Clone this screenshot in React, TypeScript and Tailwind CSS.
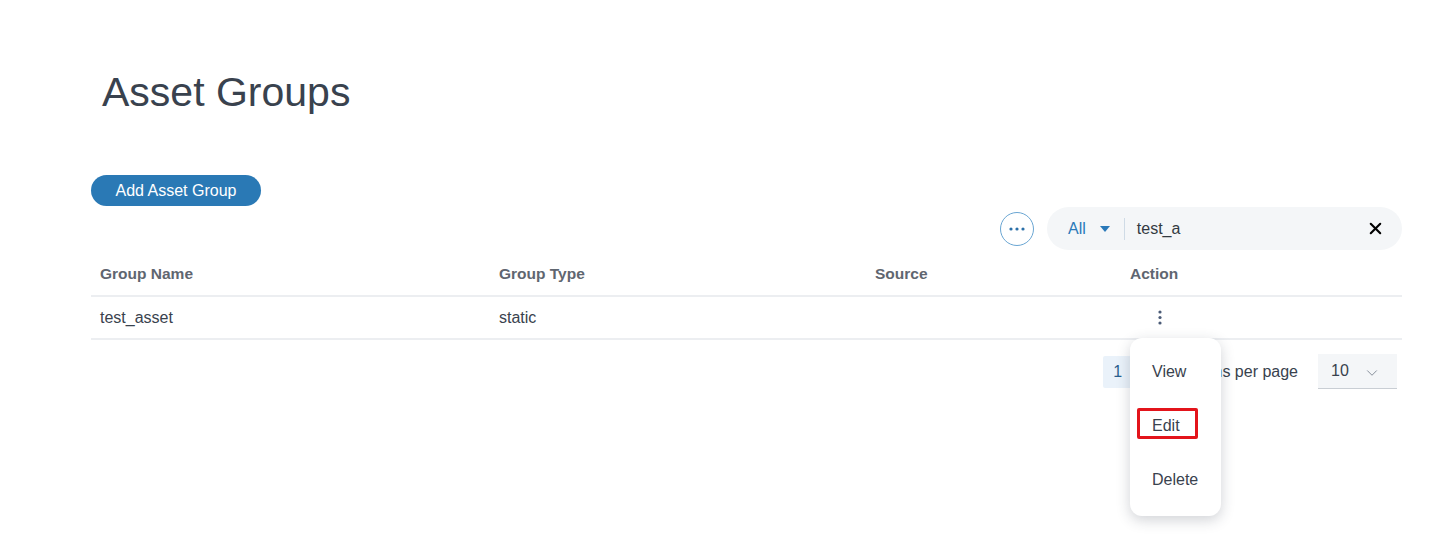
import { X, ChevronDown } from "lucide-react";

const columns = [
  { label: "Group Name", w: "w-[399px]" },
  { label: "Group Type", w: "w-[376px]" },
  { label: "Source", w: "w-[255px]" },
  { label: "Action", w: "flex-1" },
];

const rows = [{ name: "test_asset", type: "static", source: "" }];

function RowMenu() {
  return (
    <div className="absolute left-[9px] top-[41px] z-10 w-[91px] rounded-[12px] bg-white pt-[7px] pb-[9px] shadow-[0_4px_14px_rgba(40,50,70,0.22)]">
      {["View", "Edit", "Delete"].map((item) => (
        <div key={item} className="relative flex h-[54px] items-center pl-[22px] text-[16px] text-[#39424e]">
          {item}
          {item === "Edit" && (
            <span className="absolute left-[7px] top-[9px] h-[31px] w-[61px] rounded-[2px] border-[3px] border-[#e3141b]" />
          )}
        </div>
      ))}
    </div>
  );
}

export default function App() {
  return (
    <div className="min-h-[552px] bg-white pl-[91px] pr-[28px] font-['Liberation_Sans',Arial,sans-serif] text-[#39424e]">
      <h1 className="pl-[11px] pt-[68px] text-[41px] leading-[48px] font-normal text-[#39424e]">Asset Groups</h1>

      <button className="mt-[59px] flex h-[31px] w-[170px] items-center justify-center rounded-full bg-[#2a79b5] text-[16px] text-white">
        Add Asset Group
      </button>

      {/* toolbar: more + search */}
      <div className="mt-[1px] flex items-center justify-end gap-[13px]">
        <div className="flex h-[34px] w-[34px] items-center justify-center rounded-full border-[1.5px] border-[#6aa6d3] text-[#2a6fa8]">
          <svg width="16" height="4" viewBox="0 0 16 4">
            <circle cx="2" cy="2" r="1.6" fill="currentColor" />
            <circle cx="8" cy="2" r="1.6" fill="currentColor" />
            <circle cx="14" cy="2" r="1.6" fill="currentColor" />
          </svg>
        </div>
        <div className="flex h-[43px] w-[355px] items-center rounded-full bg-[#f4f6f8] pl-[21px] pr-[17px]">
          <span className="text-[16px] text-[#2a79b9]">All</span>
          <svg className="ml-[14px]" width="10" height="6" viewBox="0 0 10 6">
            <path d="M0 0h10L5 6z" fill="#2a79b9" />
          </svg>
          <span className="ml-[14px] h-[22px] w-px bg-[#cfdbe6]" />
          <span className="ml-[12px] flex-1 text-[16px] text-[#333a42]">test_a</span>
          <X size={19} strokeWidth={2.6} className="text-black" />
        </div>
      </div>

      {/* table */}
      <div className="flex h-[47px] items-center border-b-2 border-[#eceef1] pt-[3px]">
        {columns.map((c) => (
          <div key={c.label} className={`${c.w} pl-[9px] text-[15.5px] font-bold text-[#5f6670]`}>
            {c.label}
          </div>
        ))}
      </div>
      {rows.map((r) => (
        <div key={r.name} className="flex h-[43px] items-center border-b-2 border-[#eceef1] text-[16px] text-[#39424e]">
          <div className="w-[399px] pl-[9px]">{r.name}</div>
          <div className="w-[376px] pl-[9px]">{r.type}</div>
          <div className="w-[255px] pl-[9px]">{r.source}</div>
          <div className="relative flex-1 self-stretch">
            <div className="flex h-full items-center pl-[37px]">
              <svg width="4" height="15" viewBox="0 0 4 15">
                <circle cx="2" cy="2" r="1.6" fill="#4b5b77" />
                <circle cx="2" cy="7.5" r="1.6" fill="#4b5b77" />
                <circle cx="2" cy="13" r="1.6" fill="#4b5b77" />
              </svg>
            </div>
            <RowMenu />
          </div>
        </div>
      ))}

      {/* pagination */}
      <div className="mt-[14px] flex items-center justify-end pr-[5px]">
        <div className="flex h-[32px] w-[32px] items-center pl-[10px] rounded-[2px] bg-[#eaf2fa] text-[16px] text-[#2a5f8f]">1</div>
        <span className="ml-[56px] text-[16px] text-[#39424e]">Items per page</span>
        <div className="ml-[20px] flex h-[35px] w-[79px] items-center justify-between border-b border-[#c9ced4] bg-[#f4f6f8] pl-[13px] pr-[16px] text-[16px] text-[#39424e]">
          10
          <ChevronDown size={18} strokeWidth={1.2} className="mt-[3px] text-[#7b8591]" />
        </div>
      </div>
    </div>
  );
}
